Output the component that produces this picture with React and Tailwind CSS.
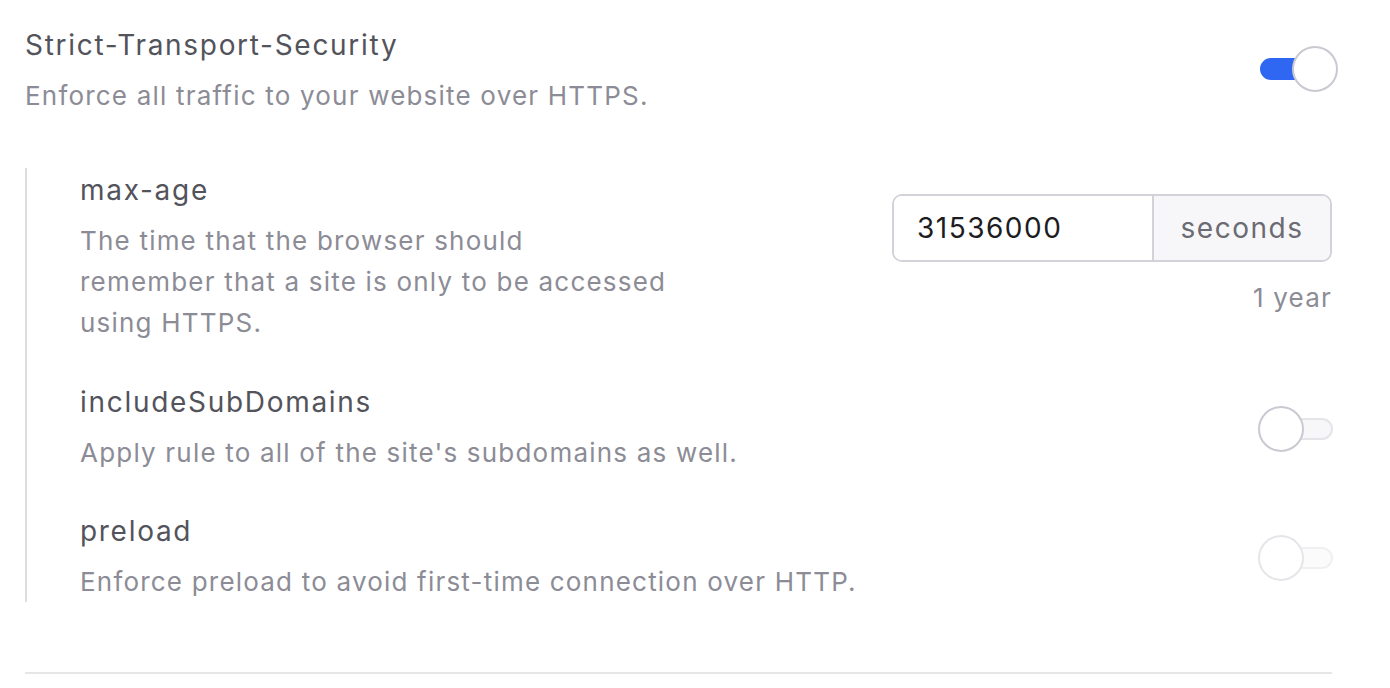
import React, { useState } from 'react';

const Toggle = ({ checked, disabled = false, onChange, className = '' }) => {
  return (
    <button
      type="button"
      onClick={() => !disabled && onChange && onChange(!checked)}
      className={`relative w-[80px] h-[48px] -mr-[6px] shrink-0 ${disabled ? 'cursor-not-allowed' : 'cursor-pointer'} ${className}`}
    >
      <span
        className={`absolute left-[2px] right-[5px] top-[13px] h-[22px] rounded-full border-2 ${
          checked
            ? 'bg-[#2f66f2] border-[#2f66f2]'
            : disabled
              ? 'bg-[#fbfbfc] border-[#f0f0f3]'
              : 'bg-[#f7f7f9] border-[#e4e4e9]'
        }`}
      ></span>
      <span
        className={`absolute top-[1px] w-[46px] h-[46px] rounded-full bg-white border-2 ${
          checked ? 'left-[34px]' : 'left-0'
        } ${disabled ? 'border-[#e6e6ea]' : 'border-[#c9c9d1]'}`}
      ></span>
    </button>
  );
};

const Title = ({ children }) => (
  <div className="text-[28px] leading-[36px] tracking-[1.7px] text-[#53535b]">{children}</div>
);

const Desc = ({ children, className = '' }) => (
  <div className={`text-[26px] leading-[41px] tracking-[1.2px] text-[#8c8c96] mt-3 ${className}`}>{children}</div>
);

export default function App() {
  const [hsts, setHsts] = useState(true);
  const [subDomains, setSubDomains] = useState(false);
  const [maxAge, setMaxAge] = useState('31536000');

  return (
    <div
      className="bg-white min-h-[688px] pl-[25px] pr-[58px] pt-[27px]"
      style={{ fontFamily: 'Inter, "Noto Sans", sans-serif' }}
    >
      <div className="flex items-center justify-between">
        <div>
          <Title>Strict-Transport-Security</Title>
          <Desc>Enforce all traffic to your website over HTTPS.</Desc>
        </div>
        <Toggle checked={hsts} onChange={setHsts} className="mb-[6px]" />
      </div>

      <div className="mt-[52px] border-l-2 border-[#dcdce1] pl-[53px] pt-[4px]">
        <div className="flex items-start justify-between">
          <div>
            <Title>max-age</Title>
            <Desc>
              The time that the browser should
              <br />
              remember that a site is only to be accessed
              <br />
              using HTTPS.
            </Desc>
          </div>
          <div className="mt-[22px] flex flex-col items-end">
            <div className="flex h-[68px] w-[440px] rounded-[10px] border-2 border-[#d2d2d8] overflow-hidden">
              <input
                value={maxAge}
                onChange={(e) => setMaxAge(e.target.value)}
                className="w-[258px] px-[23px] text-[28px] tracking-[1.5px] text-[#1d1d1f] outline-none bg-white"
              />
              <div className="flex-1 flex items-center justify-center border-l-2 border-[#d2d2d8] bg-[#f7f7f9] text-[28px] tracking-[1.5px] text-[#6b6b73]">
                seconds
              </div>
            </div>
            <div className="mt-[15px] text-[26px] leading-[41px] tracking-[1.2px] text-[#8c8c96]">1 year</div>
          </div>
        </div>

        <div className="mt-[41px] flex items-center justify-between">
          <div>
            <Title>includeSubDomains</Title>
            <Desc>Apply rule to all of the site's subdomains as well.</Desc>
          </div>
          <Toggle checked={subDomains} onChange={setSubDomains} />
        </div>

        <div className="mt-[40px] flex items-center justify-between">
          <div>
            <Title>preload</Title>
            <Desc>Enforce preload to avoid first-time connection over HTTP.</Desc>
          </div>
          <Toggle checked={false} disabled />
        </div>
      </div>

      <div className="mt-[70px] h-[2px] bg-[#e6e6e6]"></div>
    </div>
  );
}
